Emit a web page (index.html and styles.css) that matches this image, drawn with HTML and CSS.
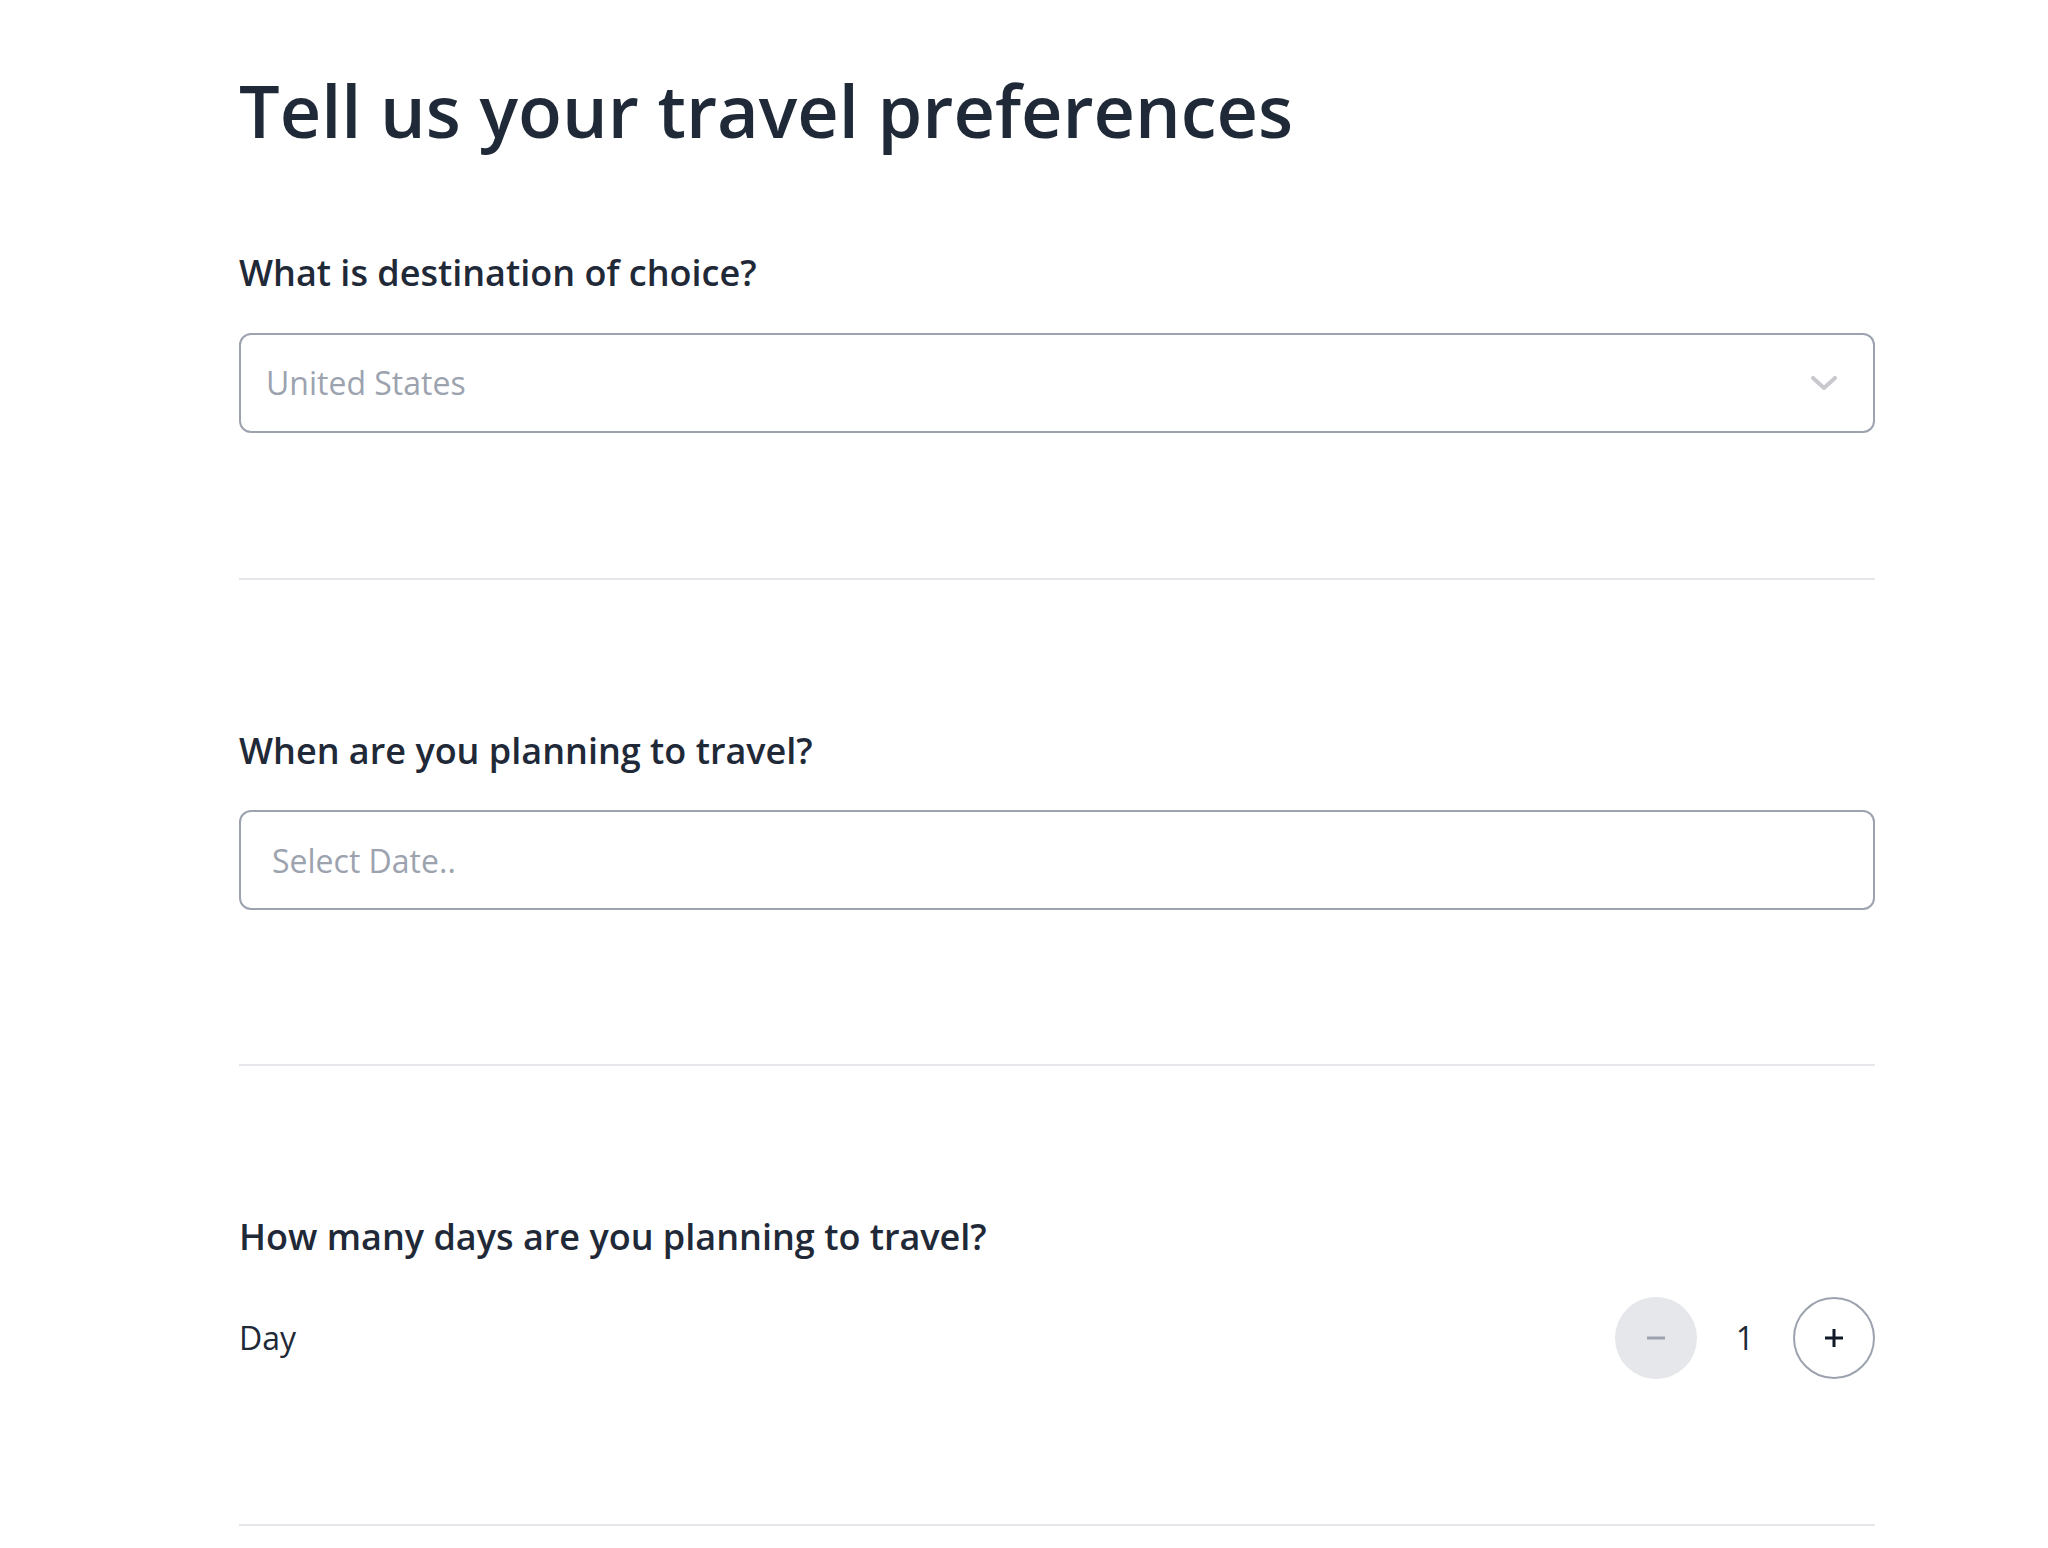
FILE: index.html
```html
<!DOCTYPE html>
<html lang="en">
<head>
    <meta charset="UTF-8">
    <meta name="viewport" content="width=device-width, initial-scale=1.0">
    <title>Travel preferences</title>
    <link rel="stylesheet" href="styles.css">
</head>
<body>
    <div class="container">
        <h1>Tell us your travel preferences</h1>

        <div class="section section-first">
            <label class="question" for="destination">What is destination of choice?</label>
            <div class="select-wrap">
                <select id="destination" class="field field-select">
                    <option>United States</option>
                </select>
                <svg class="chevron" width="26" height="14" viewBox="0 0 26 14">
                    <path d="M2 2 L13 12 L24 2" fill="none" stroke="#c8c9cc" stroke-width="4" stroke-linecap="round" stroke-linejoin="round"/>
                </svg>
            </div>
        </div>

        <div class="section">
            <label class="question" for="travel-date">When are you planning to travel?</label>
            <input type="text" id="travel-date" class="field field-date" placeholder="Select Date..">
        </div>

        <div class="section">
            <label class="question">How many days are you planning to travel?</label>
            <div class="counter-row">
                <span class="counter-label">Day</span>
                <div class="counter">
                    <button class="round-btn minus" type="button">
                        <svg width="20" height="20" viewBox="0 0 20 20">
                            <path d="M1 10 H19" stroke="#9ca3af" stroke-width="3"/>
                        </svg>
                    </button>
                    <span class="counter-value">1</span>
                    <button class="round-btn plus" type="button">
                        <svg width="20" height="20" viewBox="0 0 20 20">
                            <path d="M1 10 H19 M10 1 V19" stroke="#111827" stroke-width="3"/>
                        </svg>
                    </button>
                </div>
            </div>
        </div>
    </div>
</body>
</html>
```

FILE: styles.css
```css
body {
    margin: 0;
    padding: 0;
    background-color: #ffffff;
    font-family: "Open Sans", "Noto Sans", Arial, sans-serif;
    color: #1f2937;
}

.container {
    width: 1636px;
    margin-left: 239px;
    padding-top: 67px;
}

h1 {
    margin: 0 0 95px 0;
    font-size: 72px;
    font-weight: 600;
    line-height: 1.2;
    color: #1f2937;
}

.section {
    padding: 146px 0 145px 0;
    border-bottom: 2px solid #e5e7eb;
}

.section-first {
    padding-top: 0;
}

.question {
    display: block;
    margin-bottom: 34px;
    font-size: 36px;
    font-weight: 600;
    line-height: 1.4;
    color: #1f2937;
}

.field {
    display: block;
    box-sizing: border-box;
    width: 100%;
    height: 100px;
    border: 2px solid #9ca3af;
    border-radius: 12px;
    background-color: #ffffff;
    font-family: inherit;
    font-size: 32px;
    color: #9ca3af;
    outline: none;
}

.select-wrap {
    position: relative;
}

.field-select {
    padding: 0 80px 0 25px;
    appearance: none;
    -webkit-appearance: none;
}

.chevron {
    position: absolute;
    right: 38px;
    top: 43px;
}

.field-date {
    padding: 0 31px;
    margin-bottom: 9px;
}

.field-date::placeholder {
    color: #9ca3af;
}

.counter-row {
    display: flex;
    justify-content: space-between;
    align-items: center;
}

.counter-label {
    font-size: 32px;
    color: #1f2937;
}

.counter {
    display: flex;
    align-items: center;
}

.round-btn {
    display: flex;
    align-items: center;
    justify-content: center;
    box-sizing: border-box;
    width: 82px;
    height: 82px;
    padding: 0;
    border-radius: 50%;
    cursor: pointer;
}

.minus {
    border: none;
    background-color: #e5e7eb;
}

.plus {
    border: 2px solid #9ca3af;
    background-color: #ffffff;
}

.counter-value {
    width: 96px;
    text-align: center;
    font-size: 32px;
    color: #1f2937;
}
```
